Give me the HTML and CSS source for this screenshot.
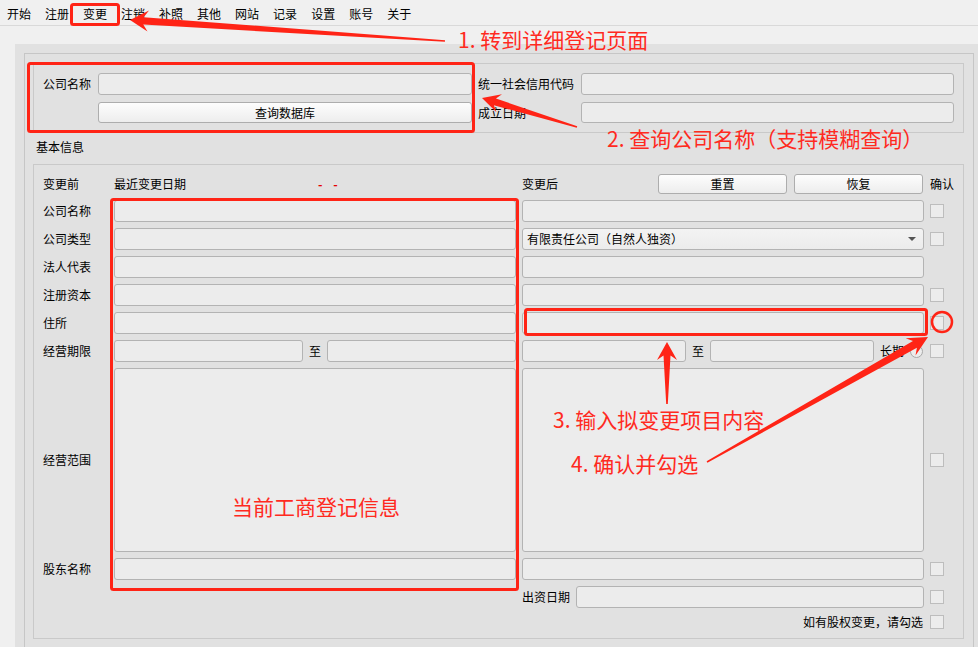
FILE: index.html
```html
<!DOCTYPE html>
<html lang="zh-CN">
<head>
<meta charset="utf-8">
<title>变更</title>
<link rel="stylesheet" href="styles.css">
</head>
<body>
<div class="menubar">
  <span class="menu-item">开始</span>
  <span class="menu-item">注册</span>
  <span class="menu-item">变更</span>
  <span class="menu-item">注销</span>
  <span class="menu-item">补照</span>
  <span class="menu-item">其他</span>
  <span class="menu-item">网站</span>
  <span class="menu-item">记录</span>
  <span class="menu-item">设置</span>
  <span class="menu-item">账号</span>
  <span class="menu-item">关于</span>
</div>
<div class="tabstrip"></div>
<div class="page">
  <div class="frame">
    <div class="group g1">
      <div class="g1-label">公司名称</div>
      <div class="input"></div>
      <div class="g1-label2">统一社会信用代码</div>
      <div class="input"></div>
      <div></div>
      <div class="button">查询数据库</div>
      <div class="g1-label2">成立日期</div>
      <div class="input input-short"></div>
    </div>
    <div class="section-title">基本信息</div>
    <div class="group g2">
      <div class="lbl">变更前</div>
      <div class="head-left"><span>最近变更日期</span><span class="dash">- -</span></div>
      <div class="head-right"><span>变更后</span><div class="button btn-reset">重置</div><div class="button btn-restore">恢复</div></div>
      <div class="confirm">确认</div>

      <div class="lbl">公司名称</div>
      <div class="input"></div>
      <div class="input"></div>
      <div class="chk-cell"><span class="chk"></span></div>

      <div class="lbl">公司类型</div>
      <div class="input"></div>
      <div class="combo"><span>有限责任公司（自然人独资）</span><span class="caret"></span></div>
      <div class="chk-cell"><span class="chk"></span></div>

      <div class="lbl">法人代表</div>
      <div class="input"></div>
      <div class="input"></div>
      <div></div>

      <div class="lbl">注册资本</div>
      <div class="input"></div>
      <div class="input"></div>
      <div class="chk-cell"><span class="chk"></span></div>

      <div class="lbl">住所</div>
      <div class="input"></div>
      <div class="input"></div>
      <div class="chk-cell"><span class="chk"></span></div>

      <div class="lbl">经营期限</div>
      <div class="split"><div class="input grow"></div><span>至</span><div class="input grow"></div></div>
      <div class="split"><div class="input fixed"></div><span>至</span><div class="input fixed"></div><span>长期</span><span class="radio"></span></div>
      <div class="chk-cell"><span class="chk"></span></div>

      <div class="lbl">经营范围</div>
      <div class="input area"></div>
      <div class="input area"></div>
      <div class="chk-cell"><span class="chk"></span></div>

      <div class="lbl">股东名称</div>
      <div class="input"></div>
      <div class="input"></div>
      <div class="chk-cell"><span class="chk"></span></div>

      <div></div>
      <div></div>
      <div class="split"><span>出资日期</span><div class="input grow"></div></div>
      <div class="chk-cell"><span class="chk"></span></div>

      <div></div>
      <div></div>
      <div class="note">如有股权变更，请勾选</div>
      <div class="chk-cell"><span class="chk"></span></div>
    </div>
  </div>
</div>

<svg class="annot" width="978" height="647" viewBox="0 0 978 647" xmlns="http://www.w3.org/2000/svg">
  <g fill="none" stroke="#ff2416" stroke-width="3">
    <rect x="71.5" y="4.5" width="47" height="20" rx="2"/>
    <rect x="28.5" y="63.5" width="445" height="68" rx="2"/>
    <rect x="111.5" y="199.5" width="406" height="390" rx="2"/>
    <rect x="525.5" y="309.5" width="401" height="25" rx="2"/>
    <circle cx="942" cy="322" r="10" stroke-width="2.5"/>
  </g>
  <g fill="#ff2416">
    <polygon points="445.05,40.2 143.67,17.2 149,10.5 130,20 147.5,31.5 143.27,24.6 444.95,41.8"/>
    <polygon points="577.23,126.23 495.94,98.59 501.99,94.17 482,98 496.45,112.35 493.90,105.29 576.77,127.77"/>
    <polygon points="667.8,404 670.5,355.5 677,360 667,342 657,360 663.5,355.5 666.2,404"/>
    <polygon points="707.39,462.70 916.91,347.86 915.51,355.55 928,337 905.67,338.15 912.97,340.90 706.61,461.30"/>
  </g>
  <g class="annot-text" fill="#ff2a1f" font-size="21" dominant-baseline="central">
    <text x="458" y="38.5">1. 转到详细登记页面</text>
    <text x="607" y="137.5">2. 查询公司名称（支持模糊查询）</text>
    <text x="553" y="419">3. 输入拟变更项目内容</text>
    <text x="571" y="463">4. 确认并勾选</text>
    <text x="232" y="506">当前工商登记信息</text>
  </g>
</svg>
</body>
</html>
```

FILE: styles.css
```css
* {
  box-sizing: border-box;
}

html,
body {
  margin: 0;
  padding: 0;
}

body {
  width: 978px;
  height: 647px;
  overflow: hidden;
  position: relative;
  background: #f0f0f0;
  color: #000;
  font-family: "Noto Sans CJK SC", "Noto Sans", sans-serif;
  font-size: 12px;
  line-height: 1;
}

.menubar {
  height: 26px;
  display: flex;
  align-items: center;
  padding-top: 3px;
  border-bottom: 1px solid #d9d9d9;
  background: #f0f0f0;
}

.menu-item {
  padding: 0 7px;
  white-space: nowrap;
}

.tabstrip {
  height: 18px;
}

.page {
  margin-left: 15px;
  background: #e1e1e1;
  padding: 9px 4px 0 9px;
}

.frame {
  border: 1px solid #c6c6c6;
  padding: 9px 9px 9px 8px;
}

.group {
  border: 1px solid #c9c9c9;
}

.g1 {
  display: grid;
  grid-template-columns: 64px 374px 109px 373px;
  grid-template-rows: 22px 21px;
  row-gap: 7px;
  align-items: center;
  padding: 9px 9px 9px 0;
}

.g1-label {
  text-align: right;
  padding-right: 7px;
  white-space: nowrap;
}

.g1-label2 {
  padding-left: 6px;
  white-space: nowrap;
}

.input {
  height: 100%;
  background: #ececec;
  border: 1px solid #b3b3b3;
  border-radius: 3px;
}

.button {
  height: 100%;
  display: flex;
  align-items: center;
  justify-content: center;
  border: 1px solid #adadad;
  border-radius: 3px;
  background: linear-gradient(#fdfdfd, #ededed);
  white-space: nowrap;
}

.section-title {
  height: 31px;
  display: flex;
  align-items: center;
  padding: 0 0 3px 3px;
}

.g2 {
  display: grid;
  grid-template-columns: 74px 402px 402px 24px;
  grid-template-rows: 20px repeat(6, 22px) 184px 22px 22px 16px;
  column-gap: 6px;
  row-gap: 6px;
  align-items: center;
  padding: 9px 9px 8px 0;
}

.lbl {
  padding-left: 9px;
  white-space: nowrap;
}

.head-left {
  display: flex;
  align-items: center;
  white-space: nowrap;
}

.dash {
  color: #e60000;
  margin-left: 132px;
  letter-spacing: 4px;
  font-weight: bold;
}

.head-right {
  height: 100%;
  display: flex;
  align-items: center;
  white-space: nowrap;
}

.btn-reset {
  width: 129px;
  margin-left: auto;
  height: 20px;
}

.btn-restore {
  width: 129px;
  margin-left: 7px;
  margin-right: 1px;
  height: 20px;
}

.confirm {
  white-space: nowrap;
}

.chk-cell {
  height: 100%;
  display: flex;
  align-items: center;
}

.chk {
  width: 14px;
  height: 14px;
  border: 1px solid #bdbdbd;
  background: #ececec;
}

.combo {
  height: 100%;
  display: flex;
  align-items: center;
  justify-content: space-between;
  padding: 0 7px 0 4px;
  border: 1px solid #b3b3b3;
  border-radius: 3px;
  background: linear-gradient(#f3f3f3, #ececec);
  white-space: nowrap;
}

.caret {
  width: 0;
  height: 0;
  border-left: 4px solid transparent;
  border-right: 4px solid transparent;
  border-top: 4px solid #555;
}

.split {
  height: 100%;
  display: flex;
  align-items: center;
  gap: 6px;
  white-space: nowrap;
}

.grow {
  flex: 1;
}

.fixed {
  width: 164px;
}

.radio {
  width: 13px;
  height: 13px;
  border: 1px solid #a8a8a8;
  border-radius: 50%;
  background: #ececec;
}

.area {
  height: 100%;
}

.note {
  text-align: right;
  padding-right: 1px;
  white-space: nowrap;
}

.annot {
  position: absolute;
  top: 0;
  left: 0;
  pointer-events: none;
}

.annot-text {
  font-family: "Noto Sans CJK SC", sans-serif;
}
```
